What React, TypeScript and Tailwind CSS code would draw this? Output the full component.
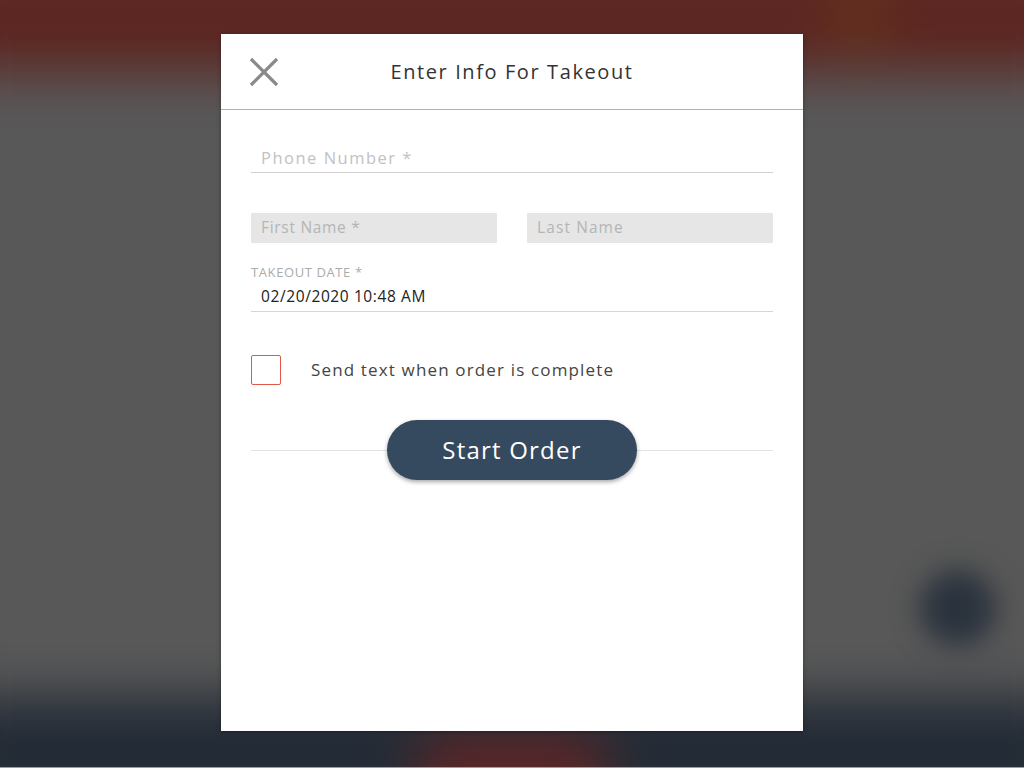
import { useState } from "react";

function Backdrop() {
  return (
    <div className="absolute inset-0 overflow-hidden bg-[#5a5a5a]">
      <div className="absolute inset-0 blur-[24px] scale-110 flex flex-col">
        <div className="h-[100px] bg-[#5c2520] flex justify-end pr-[175px] items-center">
          <div className="w-[44px] h-[44px] rounded-full bg-[#6a3a16]" />
        </div>
        <div className="flex-1 bg-[#585858]" />
        <div className="h-[98px] bg-[#222a35] flex justify-center items-end">
          <div className="w-[170px] h-[64px] rounded-t-[20px] bg-[#5e2424]" />
        </div>
      </div>
      <div className="absolute left-[920px] top-[570px] w-[76px] h-[76px] rounded-full bg-[#2a323d] blur-[14px]" />
      <div className="absolute left-0 right-0 bottom-0 h-px bg-[#9aa0a6]" />
    </div>
  );
}

export default function App() {
  const [sendText, setSendText] = useState(false);

  return (
    <div className="relative w-[1024px] h-[768px] overflow-hidden" style={{ fontFamily: '"Open Sans", "Liberation Sans", sans-serif' }}>
      <Backdrop />

      {/* Modal */}
      <div className="absolute left-[221px] top-[34px] w-[582px] h-[697px] bg-white shadow-[0_1px_4px_rgba(0,0,0,0.35)] flex flex-col">
        <div className="relative h-[76px] border-b border-[#b3b3b3] flex items-center justify-center">
          <button className="absolute left-[28px] top-[23px] w-[30px] h-[30px]">
            <svg viewBox="0 0 30 30" className="w-[30px] h-[30px]">
              <path d="M2 2 L28 28 M28 2 L2 28" stroke="#8a8a8a" strokeWidth="3.2" fill="none" />
            </svg>
          </button>
          <h2 className="text-[20px] text-[#333] tracking-[1.6px] pt-[1px]">Enter Info For Takeout</h2>
        </div>

        <div className="px-[30px] pt-[34px]">
          <div className="border-b border-[#cfcfcf] h-[29px] flex items-center pl-[10px]">
            <span className="text-[16.5px] text-[#c2c2c2] tracking-[1.5px]">Phone Number *</span>
          </div>

          <div className="grid grid-cols-2 gap-[30px] mt-[40px]">
            <div className="h-[30px] bg-[#e6e6e6] flex items-center pl-[10px]">
              <span className="text-[15.5px] text-[#b5b5b5] tracking-[0.7px]">First Name *</span>
            </div>
            <div className="h-[30px] bg-[#e6e6e6] flex items-center pl-[10px]">
              <span className="text-[15.5px] text-[#b5b5b5] tracking-[1.1px]">Last Name</span>
            </div>
          </div>

          <div className="mt-[20px]">
            <div className="text-[13px] text-[#ababab] leading-[18px] tracking-[0.6px]">TAKEOUT DATE *</div>
            <div className="border-b border-[#d6d6d6] h-[31px] flex items-center pl-[10px] pt-[2px]">
              <span className="text-[15.5px] text-[#222] tracking-[0.6px]">02/20/2020 10:48 AM</span>
            </div>
          </div>

          <label className="flex items-center mt-[43px] cursor-pointer">
            <button
              onClick={() => setSendText(!sendText)}
              className="w-[30px] h-[30px] border-[1.5px] border-[#e2574c] rounded-[2px] shrink-0"
            />
            <span className="ml-[30px] text-[17px] text-[#444] tracking-[1.15px]">Send text when order is complete</span>
          </label>

          <div className="relative mt-[35px] h-[60px] flex items-center justify-center">
            <div className="absolute left-0 right-0 top-[30px] h-px bg-[#e3e3e3]" />
            <button className="relative w-[250px] h-[60px] rounded-full bg-[#364a5f] text-white text-[24px] tracking-[1.2px] shadow-[0_2px_4px_rgba(0,0,0,0.35)]">
              Start Order
            </button>
          </div>
        </div>
      </div>
    </div>
  );
}
